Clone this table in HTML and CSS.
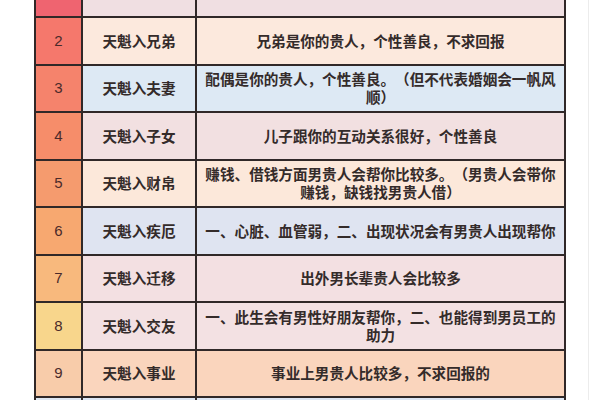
FILE: index.html
```html
<!DOCTYPE html>
<html lang="zh-CN">
<head>
<meta charset="utf-8">
<link rel="stylesheet" href="styles.css">
</head>
<body>
<div class="page">
  <div class="grid">
    <div class="num r1"></div><div class="name r1"></div><div class="desc r1"></div>
    <div class="num r2">2</div><div class="name r2">天魁入兄弟</div><div class="desc r2">兄弟是你的贵人，个性善良，不求回报</div>
    <div class="num r3">3</div><div class="name r3">天魁入夫妻</div><div class="desc r3">配偶是你的贵人，个性善良。（但不代表婚姻会一帆风顺）</div>
    <div class="num r4">4</div><div class="name r4">天魁入子女</div><div class="desc r4">儿子跟你的互动关系很好，个性善良</div>
    <div class="num r5">5</div><div class="name r5">天魁入财帛</div><div class="desc r5">赚钱、借钱方面男贵人会帮你比较多。（男贵人会带你赚钱，缺钱找男贵人借）</div>
    <div class="num r6">6</div><div class="name r6">天魁入疾厄</div><div class="desc r6">一、心脏、血管弱，二、出现状况会有男贵人出现帮你</div>
    <div class="num r7">7</div><div class="name r7">天魁入迁移</div><div class="desc r7">出外男长辈贵人会比较多</div>
    <div class="num r8">8</div><div class="name r8">天魁入交友</div><div class="desc r8">一、此生会有男性好朋友帮你，二、也能得到男员工的助力</div>
    <div class="num r9">9</div><div class="name r9">天魁入事业</div><div class="desc r9">事业上男贵人比较多，不求回报的</div>
    <div class="num r10"></div><div class="name r10"></div><div class="desc r10"></div>
  </div>
</div>
</body>
</html>
```

FILE: styles.css
```css
html, body {
  margin: 0;
  padding: 0;
  background: #ffffff;
  overflow: hidden;
}
.page {
  width: 589px;
  height: 400px;
  border-right: 1px solid #ececec;
  box-sizing: border-box;
  overflow: hidden;
}
.grid {
  display: grid;
  grid-template-columns: 45px 112px 367px;
  grid-auto-rows: 45.5px;
  gap: 2px;
  padding: 2px;
  background: #302828;
  width: max-content;
  margin: -31.5px 0 0 34px;
  font-family: "Noto Sans CJK SC", "Noto Sans", sans-serif;
  font-weight: 700;
  font-size: 14.6px;
  line-height: 18px;
  color: #342b2a;
  text-spacing-trim: space-all;
}
.grid > div {
  display: flex;
  align-items: center;
  justify-content: center;
  text-align: center;
}
.num {
  font-family: "Liberation Sans", Arial, sans-serif;
  font-weight: 400;
  font-size: 15px;
  color: #4a2a2a;
}
.desc {
  padding: 0 6px;
}
.num.r1 { background: #ef6470; }
.num.r2 { background: #f5786c; }
.num.r3 { background: #f5836c; }
.num.r4 { background: #f68d6a; }
.num.r5 { background: #f59b6e; }
.num.r6 { background: #f7a870; }
.num.r7 { background: #f8b97d; }
.num.r8 { background: #f8d68c; }
.num.r9 { background: #f8ccaa; }
.num.r10 { background: #dfe7f2; }

.name.r1, .desc.r1 { background: #f0dfe2; }
.name.r2, .desc.r2 { background: #fce9dd; }
.name.r3, .desc.r3 { background: #dde9f4; }
.name.r4, .desc.r4 { background: #f2e0e1; }
.name.r5, .desc.r5 { background: #fce8da; }
.name.r6, .desc.r6 { background: #dfe4f1; }
.name.r7, .desc.r7 { background: #f3e0e2; }
.name.r8, .desc.r8 { background: #f3e1e3; }
.name.r9, .desc.r9 { background: #fad5bd; }
.name.r10, .desc.r10 { background: #dde6f3; }
```
